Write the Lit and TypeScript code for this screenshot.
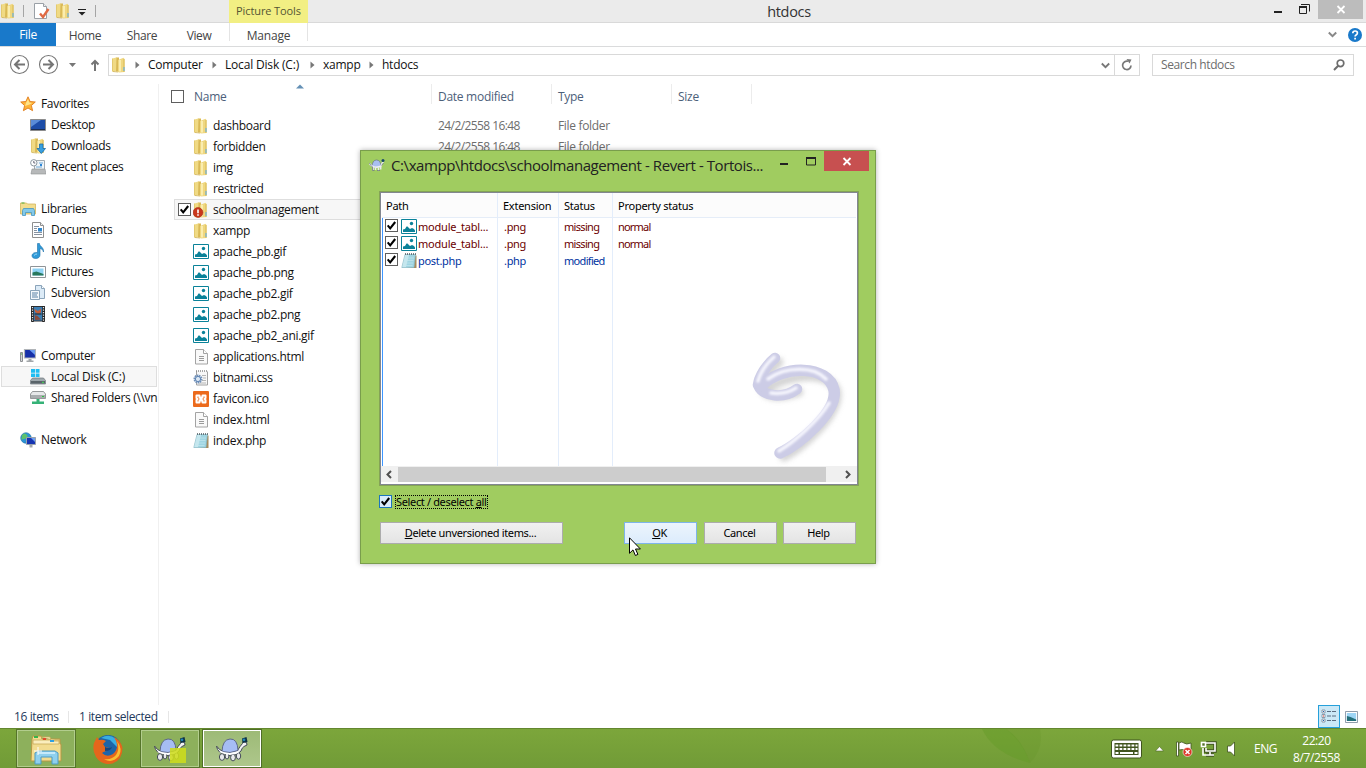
import { LitElement, html, svg, css, nothing } from "lit";
import { customElement, property } from "lit/decorators.js";
import { classMap } from "lit/directives/class-map.js";

/* ---------- 16px icon shapes ---------- */
const folder = svg`
  <path d="M1.500 1.500L6 .3V14L1.500 14.500z" fill="#f0da84"/>
  <path d="M5.500 .5H8v14H5z" fill="#d9b956"/>
  <path d="M1.500 1.500v13" stroke="#e3c96f"/>
  <path d="M7 3L12.500 .8 13.500 2v13L8 15.500 7 15z" fill="#efd780"/>
  <path d="M9 3v11.500" stroke="#fbf0b4" stroke-width="1.800"/>
  <path d="M13 2v13" stroke="#d8b850"/>
  <path d="M2 14.500l5 .5" stroke="#cfae4c" stroke-width=".8"/>
  <path d="M13 10v4" stroke="#6fb3dc" stroke-width="1.200"/>`;
const image = svg`
  <path d="M.5 .5h15v14h-15z" fill="#fff" stroke="#0a8299"/>
  <path d="M2 13v-2.500l2-.5 1.500-2.500h1L9 10l2-1 2 1 1 1.500V13z" fill="#0a8299"/><circle cx="10.500" cy="4.500" r="1.700" fill="#0a8299"/>`;
const page = svg`
  <path d="M2.500 .5h8l4 4v10.500h-12z" fill="#f9f9f9" stroke="#a3a3a3"/><path d="M10.500 .5v4h4" fill="#fff" stroke="#a3a3a3"/>
  <path d="M6 7.500h5M6 9.500h5M6 11.500h5" stroke="#9a9a9a"/>`;
const notepad = svg`
  <path d="M13 2.500h2.500v12.500H5l8-1z" fill="#a88b5c"/>
  <path d="M4 1.500h10.500l-1.500 13H.8z" fill="#9fd5e2" stroke="#7fb2bf" stroke-width=".6"/>
  <path d="M4 2h4L5 14H1.200z" fill="#d5eef4" opacity=".7"/>
  <path d="M4 5h9M3.500 7.500h9M3 10h9M2.500 12.500h9" stroke="#c4e6ee" stroke-width=".7"/>
  <path d="M4 .9h11" stroke="#4e5a60" stroke-width="1.500" stroke-dasharray="1 1"/>`;
const ICONS: Record<string, unknown> = {
  folder, image, page, notepad,
  badfolder: svg`${folder}<circle cx="5" cy="10.500" r="4.900" fill="#c9371c" stroke="#a82a12" stroke-width=".6"/><path d="M5 7.500v3.700M5 12.200v1.600" stroke="#fff" stroke-width="1.600"/>`,
  gear: svg`<path d="M3.500 1v14h11V1.500" fill="#f7f7f7" stroke="#a2a2a2"/><path d="M3 1h11" stroke="#8a8a8a" stroke-width="1.600" stroke-dasharray="1 1"/>
    <path d="M9 5.500h4M10 8h3M9 10.500h4M6 13h7" stroke="#b5b5b5"/><circle cx="5" cy="9" r="3.600" fill="#dce8f4" stroke="#7090b8" stroke-width="1.800" stroke-dasharray="1.500 .7"/><circle cx="5" cy="9" r="2.600" fill="none" stroke="#5f84b4"/>`,
  xampp: svg`<rect width="16" height="16" rx="1" fill="#ec6a1c"/><path d="M3.500 4.500h3v2h3v-2h3M3.500 11.500h3v-2h3v2h3M3.500 4.500v2.500l1 1-1 1v2.500M12.500 4.500v2.500l-1 1 1 1v2.500" fill="none" stroke="#fff" stroke-width="2" stroke-linejoin="round" stroke-linecap="round"/><path d="M6.500 8h3" stroke="#fff" stroke-width="2"/>`,
  star: svg`<path d="M8 .8l2.100 4.700 5.200.5-3.900 3.500 1.200 5.200L8 12l-4.600 2.700 1.200-5.200L.7 6l5.200-.5z" fill="#fdb338" stroke="#e07c1d" stroke-width=".9"/><path d="M8 3l1.300 3.600 3 .4-2.800 1.500L5 10l1-3z" fill="#ffe48a"/>`,
  desktop: svg`<path d="M.5 2.500h15v11H.5z" fill="#1d4da8" stroke="#8c8c8c"/><path d="M1 3h10L1 10z" fill="#5a8cd8"/><path d="M1 12.500h14" stroke="#1b2e55"/>`,
  downloads: svg`${folder}<path d="M9.500 6h3.500v4.500h2.500l-4.200 5-4.300-5h2.500z" fill="#38a0e0" stroke="#1b6da8" stroke-width=".8"/>`,
  recent: svg`<path d="M4.500 1.500h10v9h-10z" fill="#eef4f8" stroke="#a2aab0"/><path d="M6 8h6M9 4h4" stroke="#6ea8d6"/><path d="M10 5h2v2h-2z" fill="#2d86d6"/><path d="M2 10h13l1 5H1z" fill="#b7b9ba" stroke="#8d9092" stroke-width=".6"/><circle cx="3.800" cy="3.800" r="3.200" fill="#fff" stroke="#8c979f"/><path d="M3.800 2v2h1.500" fill="none" stroke="#667"/>`,
  libraries: svg`<path d="M.5 2h6l1 1h8v10H.5z" fill="#f2dd8e" stroke="#d3b55e" stroke-width=".8"/><path d="M1.500 2h3" stroke="#4caf3f"/><path d="M2.500 14.500v-5l1-2h10l1 2v5h-3v-3h-6v3z" fill="#83c9ea" stroke="#4696c0" stroke-width=".8"/>`,
  documents: svg`<path d="M2.500 .5h8l3 3v12h-11z" fill="#fff" stroke="#8f8f8f"/><path d="M10.500 .5v3h3" fill="#eee" stroke="#8f8f8f"/><path d="M4 4.500h5M4 6.500h3M4 8.500h3M4 10.500h8M4 12.500h8" stroke="#7a8796" stroke-width=".9"/><path d="M8 6h4v3.500H8z" fill="#3187ce"/>`,
  music: svg`<path d="M7.500 .5h2c0 3 4.500 3.500 4 8.500-.5-2-2-3.500-3.500-3.500V12c0 2-1.700 3.500-4.200 3.500S2 14.500 2 12.500s2.500-3.500 5.500-3z" fill="#2f9ad8" stroke="#1d6fa8" stroke-width=".6"/><path d="M4 12.500q1-1.500 3-1.500" stroke="#9cd7f7" fill="none"/>`,
  pictures: svg`<path d="M.5 2.500h15v11H.5z" fill="#fff" stroke="#8f9498"/><path d="M2.500 4.500h11v7h-11z" fill="#8ed2f4"/><path d="M2.500 11.500v-3l4-1 7 2.500v1.500z" fill="#28785c"/>`,
  subversion: svg`<path d="M5.500 .5h6l3 3v10h-9z" fill="#dcebf7" stroke="#8ba4ba"/><path d="M.5 5.500h9v9h-9z" fill="#f4f8fc" stroke="#8ba4ba"/><path d="M2 8h6M2 10h5M2 12h6" stroke="#5a82a6"/><path d="M11.500 .5v3h3" fill="#fff" stroke="#8ba4ba"/>`,
  videos: svg`<path d="M1.500 .5h13v14.500h-13z" fill="#3d7fb4" stroke="#2c2f33"/><path d="M4.500 3l3.500 2 3-2.500v4L8 8l-3-2z" fill="#c25f3c"/><path d="M4.500 9l3 1 3.500 3.500-6 .5z" fill="#8b4b3b"/><path d="M4.500 8h7" stroke="#222"/><path d="M2.500 0v16M13.500 0v16" stroke="#222" stroke-width="2.500"/><path d="M2.500 1v15M13.500 1v15" stroke="#e8e8e8" stroke-width="1.200" stroke-dasharray="1.200 1.300"/>`,
  computer: svg`<path d="M.5 4.500h2v9h-2z" fill="#d5d8da" stroke="#8c8f92"/><path d="M1 6h1" stroke="#49b53c"/><path d="M4.500 1.500h11v8.500h-11z" fill="#1630a8" stroke="#b0b4b8" stroke-width="1.200"/><path d="M9.500 2h5.500v5z" fill="#6c9df2"/><path d="M8.500 11h3v1.500h2v1.500h-7v-1.500h2z" fill="#a3a7aa"/>`,
  disk: svg`<path d="M1 0h4v3.700H1zM5.700 0H9.500v3.700H5.700zM1 4.400h4V8H1zM5.700 4.400h3.800V8H5.700z" fill="#1fbdf2"/><path d="M2.500 9h11l2 2.500v3.500H.5v-3.500z" fill="#9fa8ad" stroke="#6d767b" stroke-width=".7"/><path d="M1 12h14v2.500H1z" fill="#5a646a"/><path d="M12 13.300h2" stroke="#3fe052"/>`,
  shared: svg`<path d="M2.500 1.500h11l2 2.500v4.500H.5V4z" fill="#e6e8e9" stroke="#7d8183" stroke-width=".8"/><path d="M1 5h14V8H1z" fill="#a9adaf"/><path d="M12 6.500h2" stroke="#2ac43e"/><path d="M6.500 9h3v2.500H14v2.500H2v-2.500h4.500z" fill="#35b277"/>`,
  network: svg`<circle cx="6" cy="6" r="5.300" fill="#2b93d4" stroke="#1f6fa8" stroke-width=".6"/><path d="M2 3q3-3 5 0T4 7 1.500 7zM7 8l3-1v3l-2 1z" fill="#5cc26b"/><path d="M6.500 5.500h9v7h-9z" fill="#1734b2" stroke="#9aa2ac"/><path d="M11 6h4v4z" fill="#6ea0f2"/><path d="M9.500 13h3v2.500h-3z" fill="#a5a9ad"/>`,
  sheet: svg`<path d="M.5 .5h9l3 3v12H.5z" fill="#fff" stroke="#9aa0a6"/><path d="M9.500 .5v3h3" fill="#eee" stroke="#9aa0a6"/><path d="M6 10.500l3 3.500 5.500-8" fill="none" stroke="#e06a44" stroke-width="2.400"/>`,
  turtle: svg`<path d="M3 9.500Q3.500 3 7.500 3T12 9q-5 2-9 .5z" fill="#a9bff0" stroke="#5c668a" stroke-width=".6"/><path d="M.5 6.500q1.500 2.500 3.500 3 4 1.500 8-.5Q13 5.500 14.500 5" fill="none" stroke="#eceef2" stroke-width="1.600"/><path d="M4 10v3.500M6.500 10.500v2.500M9.500 10.500v3.500M11.700 9.500v3" stroke="#e8eaee" stroke-width="1.500"/><path d="M.5 6q1 2.500 3 4v3.500h2M8 13.500h3M12.500 8.500l2-2.500" fill="none" stroke="#626a76" stroke-width=".7"/><circle cx="14" cy="3.500" r="1.500" fill="#17496a"/>`,
};
const icon = (name: string, cls = "ic") => html`<svg class=${cls} viewBox="0 0 16 16">${ICONS[name]}</svg>`;
const tick = svg`<path d="M2.700 6.300l2.500 3 5-6.300" fill="none" stroke="#000" stroke-width="2.100"/>`;

/* Tree rows of the navigation pane: label, icon, level */
const TREE: [string, string, number][] = [
  ["Favorites", "star", 0], ["Desktop", "desktop", 1], ["Downloads", "downloads", 1], ["Recent places", "recent", 1], ["", "", 0],
  ["Libraries", "libraries", 0], ["Documents", "documents", 1], ["Music", "music", 1], ["Pictures", "pictures", 1],
  ["Subversion", "subversion", 1], ["Videos", "videos", 1], ["", "", 0],
  ["Computer", "computer", 0], ["Local Disk (C:)", "disk", 1], ["Shared Folders (\\\\vn", "shared", 1], ["", "", 0],
  ["Network", "network", 0],
];
const FILES: [string, string, string?][] = [
  ["dashboard", "folder", "24/2/2558 16:48"], ["forbidden", "folder", "24/2/2558 16:48"], ["img", "folder"], ["restricted", "folder"],
  ["schoolmanagement", "badfolder"], ["xampp", "folder"], ["apache_pb.gif", "image"], ["apache_pb.png", "image"],
  ["apache_pb2.gif", "image"], ["apache_pb2.png", "image"], ["apache_pb2_ani.gif", "image"], ["applications.html", "page"],
  ["bitnami.css", "gear"], ["favicon.ico", "xampp"], ["index.html", "page"], ["index.php", "notepad"],
];

const base = css`
  * { box-sizing: border-box; }
  svg { display: block; flex: none; }
  .ic { width: 16px; height: 16px; }
`;

@customElement("check-box")
class CheckBox extends LitElement {
  @property({ type: Boolean }) checked = false;
  @property({ type: Boolean }) hot = false;
  static styles = [base, css`
    :host { display: block; flex: none; width: 13px; height: 13px; }
    .box { width: 13px; height: 13px; background: #fff; border: 1px solid #5e5e5e; }
    .hot { background: #d9ecfb; border-color: #1c76bd; }
    svg { width: 13px; height: 13px; margin: -1px; }
  `];
  render() {
    return html`<div class=${classMap({ box: true, hot: this.hot })}>${this.checked ? html`<svg viewBox="0 0 13 13">${tick}</svg>` : nothing}</div>`;
  }
}

@customElement("explorer-window")
class ExplorerWindow extends LitElement {
  static styles = [base, css`
    :host { display: flex; flex-direction: column; height: 728px; background: #fff; color: #111; font: 12px/21px "Open Sans", "Noto Sans", sans-serif; letter-spacing: -0.320px; }
    .title { display: flex; height: 23px; background: #ebebeb; border-bottom: 1px solid #d9d9d9; }
    .quick { display: flex; width: 229px; align-items: center; }
    .bar { width: 1px; height: 12px; background: #a5a5a5; }
    .g1 { margin: 0 10px 0 7px; } .g3 { margin: 2px 9px 0 7px; width: 8px; height: 7px; }
    .q2 { margin-left: 5px; }
    .tools { width: 79px; height: 23px; background: #f2ef83; text-align: center; color: #555533; line-height: 21px; font-size: 11px; letter-spacing: -0.100px; }
    .caption { flex: 1; text-align: center; font-size: 14.500px; line-height: 24px; color: #333; letter-spacing: -0.300px; }
    .caption span { display: inline-block; margin-left: 5px; }
    .winbtns { display: flex; width: 101px; }
    .close { width: 45px; height: 19px; background: #bcbcbc; }
    .ribbon { display: flex; height: 24px; border-bottom: 1px solid #dadbdc; line-height: 26px; color: #444; }
    .ribbon > div { text-align: center; flex: none; }
    .ribbon .file { width: 56px; height: 23px; background: #1979ca; color: #fff; line-height: 24px; }
    .tab { width: 57px; padding-left: 1px; letter-spacing: -0.400px; }
    .manage { width: 79px; border-left: 1px solid #e4e4e4; border-right: 1px solid #e4e4e4; height: 18px; margin-left: 2px; letter-spacing: -0.200px; }
    .rend { display: flex; margin-left: auto; align-items: center; gap: 11px; padding-right: 4px; }
    .nav { display: flex; height: 37px; padding-top: 7px; letter-spacing: -0.240px; }
    .arrows { width: 108px; height: 24px; }
    .address { display: flex; width: 1032px; height: 22px; border: 1px solid #d9d9d9; align-items: center; padding-left: 2px; line-height: 20px; }
    .pad { width: 8px; }
    .crumb { display: flex; align-items: center; gap: 8px; }
    .crumb svg { width: 5px; height: 8px; }
    .disk { letter-spacing: -0.180px; }
    .drop { margin-left: auto; }
    .refresh { display: flex; width: 25px; height: 20px; border-left: 1px solid #d9d9d9; align-items: center; justify-content: center; margin-left: 4px; }
    .search { display: flex; width: 202px; height: 22px; border: 1px solid #d9d9d9; margin-left: 12px; padding: 0 8px 0 8px; justify-content: space-between; align-items: center; color: #6d6d6d; line-height: 20px; letter-spacing: -0.400px; }
    .body { display: flex; flex: 1; min-height: 0; }
    .tree { width: 159px; border-right: 1px solid #f0f0f0; padding-top: 9px; height: 621px; }
    .node { display: flex; height: 21px; width: 156px; margin-left: 1px; padding-left: 19px; align-items: center; gap: 5px; white-space: nowrap; }
    .child { padding-left: 29px; }
    .sel { background: #f7f7f7; box-shadow: inset 0 0 0 1px #dedede; letter-spacing: -0.180px; }
    .list { flex: 1; }
    .heads { display: flex; height: 20px; padding-left: 12px; color: #4c607a; line-height: 26px; letter-spacing: -0.280px; }
    .heads > div { border-right: 1px solid #ececec; padding-left: 6px; }
    .heads check-box { margin-top: 6px; }
    .heads .hname { display: flex; width: 261px; padding-left: 0; gap: 10px; }
    .hname svg { width: 8px; height: 5px; margin: 0 0 0 60px; }
    .w120 { width: 120px; } .w80 { width: 80px; }
    .rows { padding-top: 11px; }
    .row { display: flex; height: 21px; margin-left: 15px; align-items: center; padding-left: 19px; }
    .row.on { padding-left: 4px; background: #f7f7f7; box-shadow: inset 0 0 0 1px #dedede; width: 560px; }
    .row check-box { margin-right: 2px; }
    .name { width: 218px; margin-left: 4px; }
    .name + span { width: 120px; color: #6d6d6d; margin-left: 7px; letter-spacing: -0.580px; }
    .row .kind { color: #6d6d6d; }
    .status { display: flex; height: 23px; align-items: center; padding-left: 14px; color: #1e395b; line-height: 22px; letter-spacing: -0.400px; }
    .cut { width: 1px; height: 12px; background: #e6e6e6; }
    .s1 { width: 54px; } .s2 { width: 99px; padding-left: 10px; }
    .views { display: flex; margin-left: auto; align-items: center; height: 23px; gap: 4px; padding-right: 8px; }
    .active { width: 22px; height: 23px; background: #cbe8f6; border: 1px solid #26a0da; padding: 3px 2px; margin-right: 1px; }
  `];
  render() {
    const arrow = html`<svg viewBox="0 0 5 8"><path d="M.5 0.500l4 3.500-4 3.500z" fill="#777"/></svg>`;
    const crumb = (w: number, label: string, cls = "") => html`<div class="crumb ${cls}" style="width:${w}px">${arrow}<span>${label}</span></div>`;
    return html`
      <div class="title">
        <div class="quick">${icon("folder")}<i class="bar g1"></i>${icon("sheet")}<span class="q2"></span>${icon("folder")}
          <svg class="g3" viewBox="0 0 8 7"><path d="M0 .5h8" stroke="#222"/><path d="M.5 3h7L4 6.500z" fill="#222"/></svg><i class="bar"></i></div>
        <div class="tools">Picture Tools</div>
        <div class="caption"><span>htdocs</span></div>
        <div class="winbtns">
          <svg width="53" height="22" viewBox="0 0 53 22"><path d="M9 12h8" stroke="#222" stroke-width="2"/><path d="M34.500 7.500h7v6h-7z" fill="none" stroke="#222"/><path d="M34 7h8" stroke="#222" stroke-width="2"/><path d="M36 4.500h8.500v7" fill="none" stroke="#222"/></svg>
          <svg class="close" viewBox="0 0 45 19"><path d="M19.500 6l7 7M26.500 6l-7 7" stroke="#fff" stroke-width="1.800"/></svg>
        </div>
      </div>
      <div class="ribbon">
        <div class="file">File</div><div class="tab">Home</div><div class="tab">Share</div><div class="tab">View</div><div class="manage">Manage</div>
        <div class="rend">
          <svg width="9" height="7" viewBox="0 0 9 7"><path d="M.8 1.500l3.700 3.700 3.700-3.700" fill="none" stroke="#888" stroke-width="2"/></svg>
          <svg width="14" height="14" viewBox="0 0 14 14"><circle cx="7" cy="7" r="7" fill="#1979ca"/><path d="M4.800 5.300q0-2.300 2.300-2.300t2.300 2q0 1.200-1.300 1.900-1 .6-1 1.600M7.100 9.800v1.700" fill="none" stroke="#fff" stroke-width="1.700"/></svg>
        </div>
      </div>
      <div class="nav">
        <svg class="arrows" viewBox="0 0 108 24">
          <g fill="none" stroke="#757575"><circle cx="19.500" cy="10.500" r="9" stroke-width="1.100"/><circle cx="48.500" cy="10.500" r="9" stroke-width="1.100"/>
          <path d="M25 10.500H15M19.500 6l-4.500 4.500 4.500 4.500M43 10.500h10M48.500 6l4.500 4.500-4.500 4.500M95 17V7M91.500 10.500L95 7l3.500 3.500" stroke-width="2"/></g>
          <path d="M69 9h7l-3.500 4z" fill="#777"/>
        </svg>
        <div class="address">${icon("folder")}<div class="pad"></div>
          ${crumb(77, "Computer")}${crumb(98, "Local Disk (C:)", "disk")}${crumb(59, "xampp")}${crumb(80, "htdocs")}
          <svg class="drop" width="9" height="7" viewBox="0 0 9 7"><path d="M.8 1.500l3.700 3.700 3.700-3.700" fill="none" stroke="#777" stroke-width="1.800"/></svg>
          <div class="refresh"><svg width="12" height="12" viewBox="0 0 12 12"><path d="M10 6.500a4.200 4.200 0 1 1-3-4.200" fill="none" stroke="#777" stroke-width="1.700"/><path d="M5.500 0l5 .5-2 4z" fill="#777"/></svg></div>
        </div>
        <div class="search"><span>Search htdocs</span><svg width="12" height="12" viewBox="0 0 12 12"><circle cx="7.500" cy="4.300" r="3.300" fill="none" stroke="#6d6d6d" stroke-width="1.700"/><path d="M5.200 6.800L1 11" stroke="#6d6d6d" stroke-width="2"/></svg></div>
      </div>
      <div class="body">
        <div class="tree">${TREE.map(([label, ic, lvl]) => html`
          <div class=${classMap({ node: true, child: lvl === 1, sel: ic === "disk" })}>${ic ? icon(ic) : nothing}<span>${label}</span></div>`)}</div>
        <div class="list">
          <div class="heads">
            <div class="hname"><check-box></check-box><span>Name</span><svg viewBox="0 0 8 5"><path d="M0 4.500L4 .5l4 4z" fill="#6490b5"/></svg></div>
            <div class="w120">Date modified</div><div class="w120">Type</div><div class="w80">Size</div>
          </div>
          <div class="rows">${FILES.map(([name, ic, date]) => html`
            <div class=${classMap({ row: true, on: ic === "badfolder" })}>${ic === "badfolder" ? html`<check-box checked></check-box>` : nothing}
              ${icon(ic)}<span class="name">${name}</span>${date ? html`<span>${date}</span><span class="kind">File folder</span>` : nothing}</div>`)}</div>
        </div>
      </div>
      <div class="status"><span class="s1">16 items</span><i class="cut"></i><span class="s2">1 item selected</span><i class="cut"></i>
        <div class="views">
          <div class="active"><svg width="16" height="15" viewBox="0 0 16 15"><path d="M1 1h3v3H1zM1 5.500h3v3H1zM1 10h3v3H1z" fill="#fff" stroke="#7a8797" stroke-width=".8"/><path d="M2 2.500h1M2 11.500h1" stroke="#2463ae"/><path d="M2 7h1" stroke="#e02b20"/><path d="M6 2.500h9.500M6 7h9.500M6 11.500h9.500" stroke="#5b6c80" stroke-dasharray="4 1"/></svg></div>
          <svg width="13" height="12" viewBox="0 0 14 12" preserveAspectRatio="none"><path d="M.5 .5h13v11H.5z" fill="#fff" stroke="#8a98a8"/><path d="M2 2h10v8H2z" fill="#9dd5f5"/><path d="M2 10V5l4 1 6 2.500V10z" fill="#236f7a"/></svg>
        </div>
      </div>`;
  }
}

@customElement("revert-dialog")
class RevertDialog extends LitElement {
  static styles = [base, css`
    :host { position: absolute; left: 360px; top: 150px; width: 516px; height: 414px; background: #a0cc60; border: 1px solid #799e4c; box-shadow: 0 0 5px rgba(0,0,0,.3); padding: 0 17px 0 18px; color: #000; font: 11px/17px "Noto Sans", "Open Sans", sans-serif; letter-spacing: -0.200px; }
    .cap { display: flex; height: 40px; margin: 0 -12px 0 -10px; }
    .cap .ic { margin-top: 6px; }
    .text { width: 381px; margin-left: 6px; font: 15px/29px "Open Sans", sans-serif; color: #222; letter-spacing: -0.420px; white-space: nowrap; }
    .close { background: #c75050; }
    .list { position: relative; width: 480px; height: 295px; background: #fff; border: 1px solid #84a356; box-shadow: inset 0 0 0 1px #828790; padding: 1px 2px; }
    .table { display: grid; grid-template-columns: 116px 61px 54px 1fr; height: 273px; }
    .col { border-right: 1px solid #e3edfb; }
    .col:last-child { border-right: 0; }
    .head { height: 25px; margin-right: -1px; background: #fcfcfc; border-bottom: 1px solid #e5edf8; line-height: 26px; padding-left: 5px; border-right: 1px solid #e3edfb; letter-spacing: -0.250px; }
    .col:last-child .head { margin: 0; border-right: 0; }
    .col:first-child .head { padding-left: 4px; }
    .first { border-left: 1px solid #3d95ff; padding-left: 2px; height: 248px; }
    .cell { display: flex; height: 17px; align-items: center; padding-left: 5px; color: #6b0000; line-height: 18px; white-space: nowrap; letter-spacing: -0.680px; }
    .cell.mod { color: #0032a0; }
    .col:last-child .cell { letter-spacing: -0.800px; }
    .col:nth-child(2) .cell { letter-spacing: -0.300px; padding-left: 6px; }
    .col:last-child .cell { padding-left: 5px; }
    .first .cell { padding-left: 0; letter-spacing: -0.200px; }
    .first .cell.mod { letter-spacing: -0.300px; }
    .first .ic { margin: 0 1px 0 3px; }
    .first check-box { margin-top: -2px; }
    .art { position: absolute; left: 366px; top: 155px; width: 108px; height: 120px; }
    .scroll { display: flex; height: 16px; margin: 0 -1px; background: #f0f0f0; align-items: center; padding: 0 6px 0 5px; }
    .thumb { width: 428px; height: 15px; background: #cdcdcd; margin: 0 19px 0 6px; }
    .all { display: flex; height: 13px; margin-top: 9px; align-items: center; gap: 4px; }
    .focus { outline: 1px dotted #000; line-height: 11px; height: 12px; width: 91px; white-space: nowrap; letter-spacing: -0.350px; }
    .btns { display: flex; margin: 14px 0 0 1px; letter-spacing: -0.350px; }
    .btn { flex: none; width: 73px; height: 22px; border: 1px solid #acacac; background: linear-gradient(#f1f1f1, #e4e4e4); text-align: center; line-height: 20px; margin-right: 6px; }
    .wide { width: 183px; margin-right: 61px; padding-right: 2px; }
    .ok { background: linear-gradient(#ecf4fc, #dcecfc); border-color: #7eb4ea; margin-right: 7px; padding-right: 2px; }
    .can { padding-right: 2px; }
  `];
  render() {
    const rows = [["module_tabl...", "image", ".png", "missing", "normal"], ["module_tabl...", "image", ".png", "missing", "normal"], ["post.php", "notepad", ".php", "modified", ""]];
    const cell = (r: string[], c: unknown) => html`<div class=${classMap({ cell: true, mod: r[3] === "modified" })}>${c}</div>`;
    return html`
      <div class="cap">${icon("turtle")}<div class="text">C:\\xampp\\htdocs\\schoolmanagement - Revert - Tortois...</div>
        <svg width="52" height="19" viewBox="0 0 52 19"><path d="M8 13h8" stroke="#222" stroke-width="2"/><path d="M34.500 7v7h9V7z" fill="none" stroke="#222"/><path d="M34 7h10" stroke="#222" stroke-width="2"/></svg>
        <svg class="close" width="45" height="20" viewBox="0 0 45 20"><path d="M19.500 7l7 7M26.500 7l-7 7" stroke="#fff" stroke-width="1.800"/></svg>
      </div>
      <div class="list">
        <div class="table">
          <div class="col"><div class="head">Path</div><div class="first">${rows.map((r) => cell(r, html`<check-box checked></check-box>${icon(r[1])}<span>${r[0]}</span>`))}</div></div>
          <div class="col"><div class="head">Extension</div>${rows.map((r) => cell(r, r[2]))}</div>
          <div class="col"><div class="head">Status</div>${rows.map((r) => cell(r, r[3]))}</div>
          <div class="col"><div class="head">Property status</div>${rows.map((r) => cell(r, r[4]))}</div>
        </div>
        <svg class="art" viewBox="0 0 108 120">
          <defs><filter id="s" x="-20%" y="-20%" width="140%" height="140%"><feGaussianBlur stdDeviation="2.500"/></filter><filter id="h" x="-20%" y="-20%" width="140%" height="140%"><feGaussianBlur stdDeviation="1.200"/></filter></defs>
          <g fill="none" stroke-linecap="round" stroke-linejoin="round">
            <g transform="translate(4 4)" filter="url(#s)" stroke="#b8b8b8" stroke-width="9" opacity=".6"><path d="M29 11Q19 18 13 36q1 10 18 9 10-1 18-4M17 38C40 22 82 20 87 41C90 65 50 98 34 106"/></g>
            <path d="M29 11C20 18 13 30 12 38C17 50 38 52 51 42" stroke="#cccce6" stroke-width="10.500"/>
            <path d="M15 39C36 17 83 18 88 43C92 65 52 98 34 106" stroke="#cccce6" stroke-width="11.500"/>
            <g filter="url(#h)" stroke="#f5f5fd" stroke-width="3.500"><path d="M28 10C20 17 14 27 12 34M22 32C40 19 68 19 80 32M83 56C72 74 48 95 33 104M25 46Q39 48 50 41"/></g>
          </g>
        </svg>
        <div class="scroll">
          <svg width="6" height="9" viewBox="0 0 6 9"><path d="M5 1L1.500 4.500 5 8" fill="none" stroke="#505050" stroke-width="2"/></svg>
          <div class="thumb"></div>
          <svg width="6" height="9" viewBox="0 0 6 9"><path d="M1 1l3.500 3.500L1 8" fill="none" stroke="#505050" stroke-width="2"/></svg>
        </div>
      </div>
      <div class="all"><check-box checked hot></check-box><span class="focus">Select / deselect <u>a</u>ll</span></div>
      <div class="btns"><div class="btn wide"><u>D</u>elete unversioned items...</div><div class="btn ok"><u>O</u>K</div><div class="btn can">Cancel</div><div class="btn can">Help</div></div>`;
  }
}

@customElement("task-bar")
class TaskBar extends LitElement {
  static styles = [base, css`
    :host { display: flex; height: 40px; background: linear-gradient(#7ca63b, #719b37); border-top: 1px solid #63872f; color: #fff; font: 12px/17px "Open Sans", sans-serif; letter-spacing: -0.300px; padding-left: 16px; }
    .b { display: flex; width: 60px; height: 39px; align-items: center; justify-content: center; }
    .run { background: #8db05c; border: 1px solid #55742a; box-shadow: inset 0 0 0 1px #b2cd8d; }
    .cur { background: linear-gradient(#9dba76, #aec78c); border: 1px solid #506e28; box-shadow: inset 0 0 0 1px #fff; margin-left: 2px; }
    .ff { width: 64px; padding-right: 1px; }
    .leaf { margin-left: auto; }
    .tray { display: flex; align-items: center; width: 134px; }
    .texts { width: auto; padding-left: 9px; }
    .lang { width: 46px; letter-spacing: -0.500px; }
    .clock { width: 80px; text-align: center; padding: 1px 19px 0 0; margin-left: -14px; letter-spacing: -0.400px; }
  `];
  render() {
    const turtle = (patch: boolean) => html`<svg width="34" height="28" viewBox="0 0 34 28">
      <path d="M1.500 11q3 4.500 7 5.500l14-1q3-5 5-7l1-2 3 1 .5 2.500-3 1.500q-2 1-3 4.500l-4 3.500-8 1-9-3q-3-3-3.500-6z" fill="#f1f2f4" stroke="#454b58"/>
      <g fill="#e9eaed" stroke="#454b58"><ellipse cx="7" cy="22" rx="2.600" ry="3.400"/><ellipse cx="12" cy="21" rx="1.900" ry="3"/><ellipse cx="18" cy="22.500" rx="2.400" ry="3.400"/><ellipse cx="23.500" cy="21" rx="2.200" ry="3.200"/></g>
      <path d="M7 16.500Q7.500 4.500 15 4t8 11.500q-8 3.500-16 1z" fill="#a6bdf4" stroke="#5d6789"/><path d="M5 16.500q9 4.500 18.500.5" fill="none" stroke="#fff" stroke-width="1.800"/>
      <path d="M27 3.500l4.500-1.500 1 5-5 1z" fill="#0d2f43"/><circle cx="29" cy="4.800" r="1.400" fill="#2386b7"/>
      ${patch ? svg`<path d="M17 13h16v15H17z" fill="#cddc1d" opacity=".88"/>` : nothing}</svg>`;
    return html`
      <div class="b run"><svg width="34" height="32" viewBox="0 0 34 32">
        <path d="M3 6l1-3h8l1 3h18v5h1v17H2z" fill="#f2dc90" stroke="#b89844"/><path d="M4 7h26v4H4zM12 4h9l1 4h9" fill="#fbeebd" stroke="#c9aa58" stroke-width=".8"/>
        <path d="M5 3h4v2H5z" fill="#37b34a"/><path d="M14 5h3v2h-3z" fill="#e14a2e"/><path d="M21 7h4v2h-4z" fill="#2f9fe0"/>
        <path d="M6 31V20l3-2h17l3 2v11h-6v-7H12v7z" fill="#8fd0ee" stroke="#4d9bc2"/><path d="M9 20h17" stroke="#d9f3ff" stroke-width="1.500"/><path d="M9 14v8M5 18h8" stroke="#fff"/></svg></div>
      <div class="b ff"><svg width="30" height="30" viewBox="0 0 30 30">
        <circle cx="15" cy="14.500" r="13.500" fill="#1d64a8"/><path d="M8 4Q16-1 23 5q4 5 3 10L17 6z" fill="#39aee2"/>
        <path d="M1 9Q4 3 4 3l2 3q4-1 7 1l-3 3 2 3 4 1-3 3q-3 1-4 2 5 5 11 1 6-5 3-13l-2-4q6 3 8 9l.5 2q0 12-10 15.500Q9 32 3 23-1 16 1 9z" fill="#e4661c"/>
        <path d="M24 7q6 8 2 15-7 8-15 3 8 1 12-4 4-6 1-14z" fill="#fbbd32"/><path d="M12 13q4 2 7 0-1 4-7 4z" fill="#18457e"/></svg></div>
      <div class="b run">${turtle(true)}</div><div class="b cur">${turtle(false)}</div>
      <svg class="leaf" width="145" height="39" viewBox="0 0 145 39"><path d="M16 0Q28 25 64 34Q56 10 40 0z" fill="#649c28" opacity=".45"/><path d="M40 0Q56 12 64 34Q78 20 74 0z" fill="#659426" opacity=".25"/></svg>
      <div class="tray"><svg width="134" height="39" viewBox="0 0 134 39">
        <rect x=".5" y="11" width="30" height="18" rx="2" fill="#fff" stroke="#41541f"/><path d="M3.500 14h24v12h-24z" fill="#41541f"/>
        <path d="M4.500 16.500h22M4.500 20h22" stroke="#fff" stroke-width="2.200" stroke-dasharray="2.800 1.200"/><path d="M4.500 24h3M9 24h13M23.500 24h3" stroke="#fff" stroke-width="2.200"/>
        <path d="M44.500 22l4-4.500 4 4.500z" fill="#fff" stroke="#4e6627" stroke-width=".6"/>
        <g stroke="#3f5220" stroke-width=".8" fill="#fff"><path d="M65.500 13h2v14h-2z"/><path d="M68 14q3-2 5 0t7 0v7q-4 1-6 0t-6 0z"/></g>
        <circle cx="76.500" cy="23" r="4.500" fill="#dc3528" stroke="#fff" stroke-width=".6"/><path d="M74.500 21l4 4M78.500 21l-4 4" stroke="#fff" stroke-width="1.500"/>
        <g fill="none" stroke="#3f5220" stroke-width="3.400"><path d="M95 14h9v8h-10v-3M99 23v3M95 26h8M92 13v4"/></g><g fill="none" stroke="#fff" stroke-width="1.600"><path d="M95 14h9v8h-9v-3M99 23v3M95 26h8M92 19v7h4"/><rect x="90.500" y="13.500" width="4" height="4" fill="#53712a"/></g>
        <path d="M116.500 17h3l4-4v14l-4-4h-3z" fill="#fff" stroke="#3f5220" stroke-width=".8"/></svg></div>
      <div class="tray texts"><span class="lang">ENG</span><div class="clock">22:20<br>8/7/2558</div></div>`;
  }
}

@customElement("app-root")
class AppRoot extends LitElement {
  static styles = [base, css`
    :host { display: block; position: relative; width: 1366px; height: 768px; overflow: hidden; }
    .cursor { position: absolute; left: 629px; top: 537px; width: 12px; height: 20px; }
  `];
  render() {
    return html`<explorer-window></explorer-window><task-bar></task-bar><revert-dialog></revert-dialog>
      <svg class="cursor" viewBox="0 0 12 20"><path d="M.5 .8v15.500l3.500-3.400 2.400 5.600 2.500-1.100-2.400-5.400h4.900z" fill="#fff" stroke="#000"/></svg>`;
  }
}
